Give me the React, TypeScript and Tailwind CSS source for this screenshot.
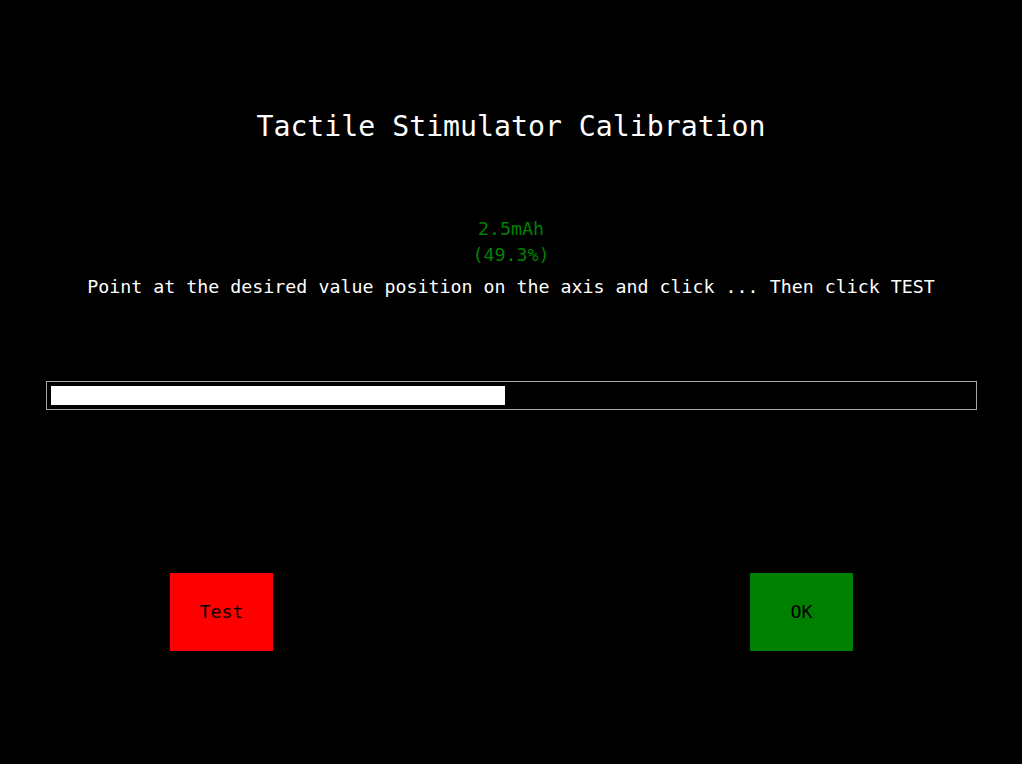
import React from "react";

const VALUE_MAH = 2.5;
const PERCENT = 49.3;

const App: React.FC = () => {
  return (
    <div
      className="w-full h-[764px] bg-black text-white flex flex-col overflow-hidden"
      style={{ fontFamily: '"DejaVu Sans Mono", monospace' }}
    >
      <h1 className="mt-[110px] h-[34px] leading-[34px] text-[28.2px] text-center">
        Tactile Stimulator Calibration
      </h1>

      <div className="mt-[72px] flex flex-col items-center text-[18.3px] leading-[26px]">
        <p className="text-[#008000]">{VALUE_MAH}mAh</p>
        <p className="text-[#008000]">({PERCENT}%)</p>
        <p className="mt-[6px]">
          Point at the desired value position on the axis and click ... Then click TEST
        </p>
      </div>

      <div className="mt-[81px] ml-[46px] mr-[45px] h-[29px] border border-[#a8a8a8] p-[4px]">
        <div className="h-full bg-white" style={{ width: `${PERCENT}%` }} />
      </div>

      <div className="mt-[163px] pl-[170px] pr-[169px] flex justify-between">
        <button
          type="button"
          className="w-[103px] h-[78px] bg-[#ff0000] text-black text-[18.3px]"
        >
          Test
        </button>
        <button
          type="button"
          className="w-[103px] h-[78px] bg-[#008000] text-black text-[18.3px]"
        >
          OK
        </button>
      </div>
    </div>
  );
};

export default App;
